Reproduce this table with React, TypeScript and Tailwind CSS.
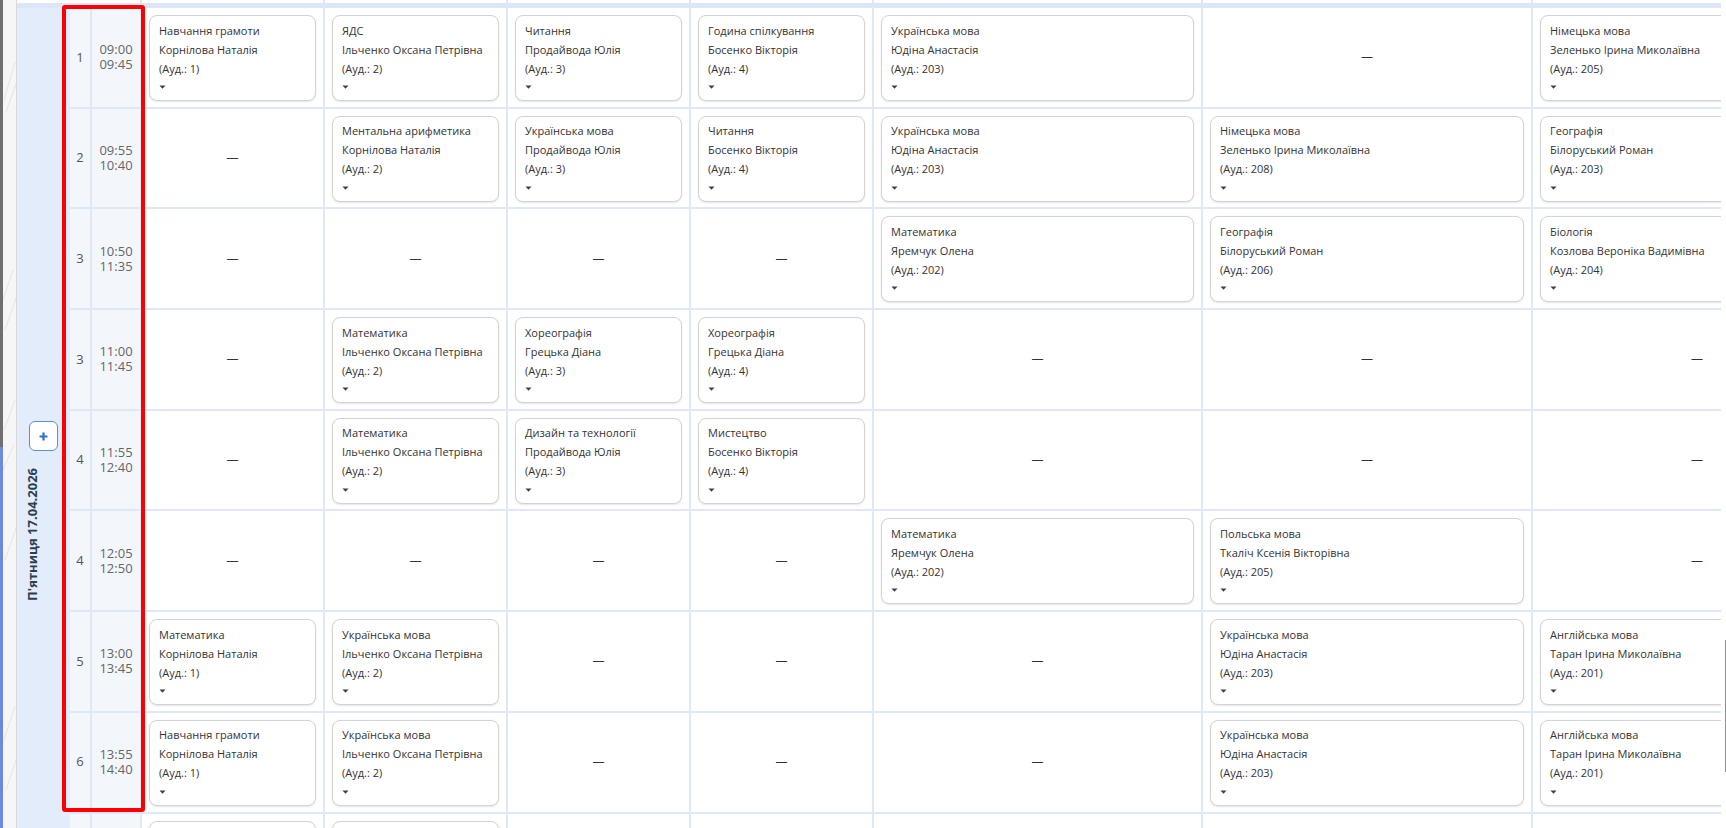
import React from "react";

type L = { s: string; t: string; a: string } | null;
const l = (s: string, t: string, a: string): L => ({ s, t, a });

const K = "Корнілова Наталія";
const I = "Ільченко Оксана Петрівна";
const P = "Продайвода Юлія";
const B = "Босенко Вікторія";
const Y = "Юдіна Анастасія";
const Z = "Зеленько Ірина Миколаївна";
const R = "Білоруський Роман";
const YO = "Яремчук Олена";
const G = "Грецька Діана";
const T = "Таран Ірина Миколаївна";

const rows: { n: string; a: string; b: string; c: L[]; ghost?: boolean }[] = [
  { n: "1", a: "09:00", b: "09:45", c: [l("Навчання грамоти", K, "1"), l("ЯДС", I, "2"), l("Читання", P, "3"), l("Година спілкування", B, "4"), l("Українська мова", Y, "203"), null, l("Німецька мова", Z, "205")] },
  { n: "2", a: "09:55", b: "10:40", c: [null, l("Ментальна арифметика", K, "2"), l("Українська мова", P, "3"), l("Читання", B, "4"), l("Українська мова", Y, "203"), l("Німецька мова", Z, "208"), l("Географія", R, "203")] },
  { n: "3", a: "10:50", b: "11:35", c: [null, null, null, null, l("Математика", YO, "202"), l("Географія", R, "206"), l("Біологія", "Козлова Вероніка Вадимівна", "204")] },
  { n: "3", a: "11:00", b: "11:45", c: [null, l("Математика", I, "2"), l("Хореографія", G, "3"), l("Хореографія", G, "4"), null, null, null] },
  { n: "4", a: "11:55", b: "12:40", c: [null, l("Математика", I, "2"), l("Дизайн та технології", P, "3"), l("Мистецтво", B, "4"), null, null, null] },
  { n: "4", a: "12:05", b: "12:50", c: [null, null, null, null, l("Математика", YO, "202"), l("Польська мова", "Ткаліч Ксенія Вікторівна", "205"), null] },
  { n: "5", a: "13:00", b: "13:45", c: [l("Математика", K, "1"), l("Українська мова", I, "2"), null, null, null, l("Українська мова", Y, "203"), l("Англійська мова", T, "201")] },
  { n: "6", a: "13:55", b: "14:40", c: [l("Навчання грамоти", K, "1"), l("Українська мова", I, "2"), null, null, null, l("Українська мова", Y, "203"), l("Англійська мова", T, "201")] },
  { n: "", a: "", b: "", ghost: true, c: [l("", "", ""), l("", "", ""), null, null, null, null, null] },
];

const colW = ["w-[183px]", "w-[183px]", "w-[183px]", "w-[183px]", "w-[329px]", "w-[330px]", "w-[330px]"];

function Card({ x, ghost }: { x: { s: string; t: string; a: string }; ghost?: boolean }) {
  return (
    <div className="h-[86px] rounded-[8px] border border-[#d3d3d3] bg-white pl-[9px] pt-[4.5px] text-[11px] leading-[19px] text-[#333] shadow-[0_1px_2px_rgba(0,0,0,0.1)]">
      {!ghost && (
        <>
          <div className="whitespace-nowrap">{x.s}</div>
          <div className="whitespace-nowrap">{x.t}</div>
          <div className="whitespace-nowrap">(Ауд.: {x.a})</div>
          <div className="flex h-[19px] items-center">
            <svg width="7" height="4" viewBox="0 0 7 4">
              <path d="M0.5 0.5H6.5L3.5 3.8Z" fill="#404040" />
            </svg>
          </div>
        </>
      )}
    </div>
  );
}

function LeftStrip() {
  return (
    <div className="flex w-[17px] shrink-0">
      <div className="flex w-[3px] flex-col">
        <div className="h-[447px] bg-[#6f6f6f]" />
        <div className="flex-1 bg-[#6d89df]" />
      </div>
      <div className="w-[13px] bg-[#f6f6f6]">
        <svg width="13" height="828" viewBox="0 0 13 828">
          <g stroke="#e4e4e4" strokeWidth="1" fill="none">
            <path d="M1 100 L12 62" />
            <path d="M3 112 L13 84" />
            <path d="M0 300 L10 270" />
            <path d="M2 330 L13 298" />
            <path d="M1 430 L12 400" />
            <path d="M0 470 L11 444" />
            <path d="M2 560 L13 528" />
            <path d="M1 740 L12 706" />
            <path d="M3 790 L13 760" />
          </g>
        </svg>
      </div>
      <div className="w-px bg-[#d9d9d9]" />
    </div>
  );
}

function DayColumn() {
  return (
    <div className="flex w-[53px] shrink-0 flex-col bg-[#e3ecfa] pt-[413px]">
      <div className="flex h-[30px] w-[29px] items-center justify-center self-center rounded-[6px] border border-[#5b8ee6] bg-white">
        <svg width="9" height="9" viewBox="0 0 9 9">
          <path d="M4.5 0.5V8.5M0.5 4.5H8.5" stroke="#2f6fd0" strokeWidth="2.2" />
        </svg>
      </div>
      <div className="ml-[6px] mt-[17px] self-start whitespace-nowrap text-[13px] font-bold leading-[18px] text-[#2c3e50] [writing-mode:vertical-rl] rotate-180">
        П'ятниця 17.04.2026
      </div>
    </div>
  );
}

export default function App() {
  return (
    <div className="relative flex h-[828px] w-[1726px] overflow-hidden bg-white font-['Open_Sans',sans-serif] text-[#333]">
      <LeftStrip />
      <div className="flex w-[1704px] shrink-0 flex-col overflow-hidden">
        <div className="flex h-[3px] shrink-0">
          <div className="w-[123px] shrink-0" />
          {colW.map((w, i) => (
            <div key={i} className={`${w} shrink-0 border-l-2 border-[#dfe8f7]`} />
          ))}
        </div>
        <div className="h-[5px] shrink-0 bg-[#dce6f6]" />
        <div className="flex">
          <DayColumn />
          <div className="flex flex-col">
            {rows.map((r, ri) => (
              <div key={ri} className="flex h-[100.7px] shrink-0 border-b-2 border-[#dfe8f7]">
                <div className="flex w-[22px] shrink-0 items-center justify-center border-r-2 border-[#dfe8f7] bg-[#f3f7fc] text-[13px] text-[#555]">
                  {r.n}
                </div>
                <div className="flex w-[48px] shrink-0 flex-col items-center justify-center bg-[#f3f7fc] text-[13px] leading-[15px] text-[#666]">
                  {!r.ghost && (
                    <>
                      <div>{r.a}</div>
                      <div>{r.b}</div>
                    </>
                  )}
                </div>
                {r.c.map((c, ci) =>
                  c ? (
                    <div key={ci} className={`${colW[ci]} shrink-0 border-l-2 border-[#dfe8f7] px-[7px] pt-[7px]`}>
                      <Card x={c} ghost={r.ghost} />
                    </div>
                  ) : (
                    <div key={ci} className={`${colW[ci]} flex shrink-0 items-center justify-center border-l-2 border-[#dfe8f7] text-[12px] text-[#333]`}>
                      {r.ghost ? null : "—"}
                    </div>
                  )
                )}
              </div>
            ))}
          </div>
        </div>
      </div>
      <div className="flex w-[5px] shrink-0 flex-col items-end pt-[640px]">
        <div className="h-[132px] w-px bg-[#8d8d8d]" />
      </div>
      <div className="pointer-events-none absolute left-[62px] top-[5px] h-[807px] w-[83px] rounded-[3px] border-4 border-[#ff0000]" />
    </div>
  );
}
